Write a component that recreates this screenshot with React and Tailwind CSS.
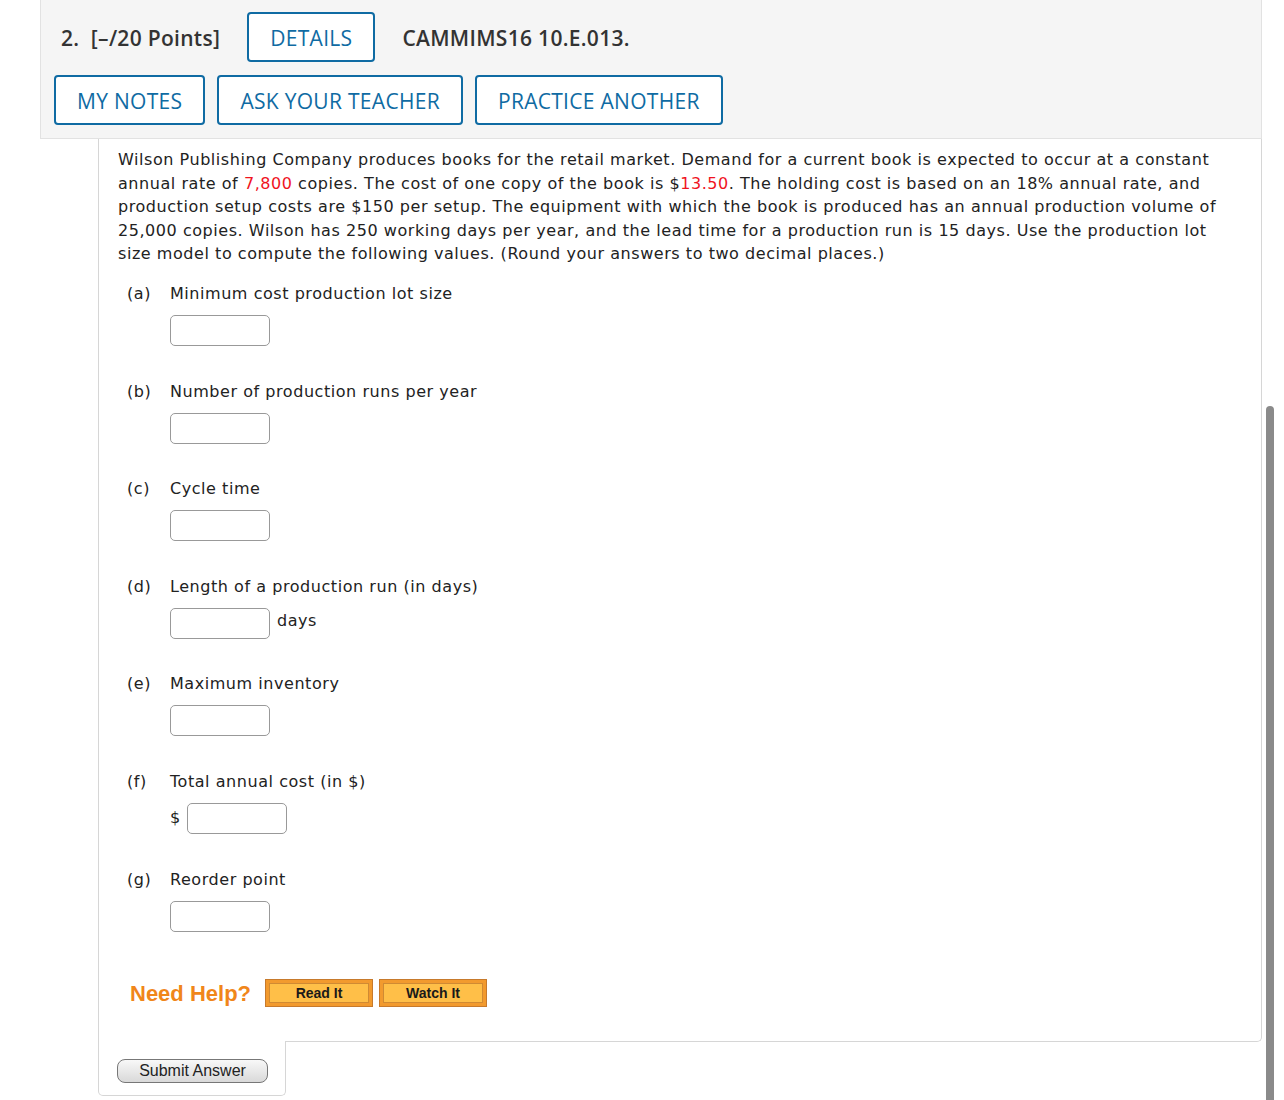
const parts = [
  { key: 'a', label: 'Minimum cost production lot size' },
  { key: 'b', label: 'Number of production runs per year' },
  { key: 'c', label: 'Cycle time' },
  { key: 'd', label: 'Length of a production run (in days)', after: 'days' },
  { key: 'e', label: 'Maximum inventory' },
  { key: 'f', label: 'Total annual cost (in $)', before: '$' },
  { key: 'g', label: 'Reorder point' },
];

const headFont = { fontFamily: '"Open Sans", "Liberation Sans", sans-serif', letterSpacing: '0.3px' };
const bodyFont = { fontFamily: '"DejaVu Sans", Verdana, sans-serif', letterSpacing: '0.55px' };
const arial = { fontFamily: '"Liberation Sans", Arial, sans-serif' };

function OutlineButton({ children }) {
  return (
    <button
      className="h-[50px] px-[21px] pt-[2px] border-2 border-[#0f6ba3] rounded-[4px] bg-white text-[#0f6ba3] text-[21px] font-medium leading-none"
      style={headFont}
    >
      {children}
    </button>
  );
}

function HelpButton({ children }) {
  return (
    <button className="h-[28px] w-[108px] p-[3px] bg-[#f29a2e] border border-[#c77a2c]">
      <span
        className="flex h-full items-center justify-center bg-[#ffbf48] border border-[#d08a33] text-[14px] font-bold text-[#1a1a1a]"
        style={arial}
      >
        {children}
      </span>
    </button>
  );
}

export default function App() {
  return (
    <div className="min-h-screen bg-white pl-[40px] pr-[22px]">
      <div className="bg-[#f5f5f5] border-x border-b border-[#e2e2e2] pt-[12px] pb-[13px]">
        <div className="flex items-center pl-[20px]">
          <span className="text-[21px] font-semibold text-[#333] pt-[3px]" style={headFont}>
            2.&nbsp; [–/20 Points]
          </span>
          <span className="ml-[27px]">
            <OutlineButton>DETAILS</OutlineButton>
          </span>
          <span className="ml-[27px] text-[21px] font-semibold text-[#333] pt-[3px]" style={headFont}>
            CAMMIMS16 10.E.013.
          </span>
        </div>
        <div className="flex gap-[12px] pl-[13px] mt-[13px]">
          <OutlineButton>MY NOTES</OutlineButton>
          <OutlineButton>ASK YOUR TEACHER</OutlineButton>
          <OutlineButton>PRACTICE ANOTHER</OutlineButton>
        </div>
      </div>

      <div className="ml-[58px]">
        <div className="border-x border-b border-[#d6d6d6] rounded-br-[5px] pl-[19px] pr-[20px] pt-[9px] pb-[31px] text-[16px] text-[#222]" style={bodyFont}>
          <p className="leading-[23.6px]">
            Wilson Publishing Company produces books for the retail market. Demand for a current book is expected to occur at a constant annual rate of{' '}
            <span className="text-[#f0141e]">7,800</span> copies. The cost of one copy of the book is ${''}
            <span className="text-[#f0141e]">13.50</span>. The holding cost is based on an 18% annual rate, and production setup costs are $150 per setup. The equipment with which the book is produced has an annual production volume of 25,000 copies. Wilson has 250 working days per year, and the lead time for a production run is 15 days. Use the production lot size model to compute the following values. (Round your answers to two decimal places.)
          </p>

          <div className="mt-[18px] ml-[9px]">
            {parts.map((p) => (
              <div key={p.key} className="mb-[35.6px] last:mb-0">
                <div className="flex h-[20px] items-center leading-[20px]">
                  <span className="w-[43px]">({p.key})</span>
                  <span>{p.label}</span>
                </div>
                <div className="flex items-center mt-[11px] pl-[43px]">
                  {p.before && <span className="mr-[6px]">{p.before}</span>}
                  <input
                    type="text"
                    className="w-[100px] h-[31px] border border-[#999] rounded-[5px] bg-white outline-none"
                  />
                  {p.after && <span className="ml-[7px] -mt-[4px]">{p.after}</span>}
                </div>
              </div>
            ))}
          </div>

          <div className="flex items-center mt-[45px] ml-[12px]" style={{ letterSpacing: 0 }}>
            <span className="text-[22px] font-bold text-[#f0861a] mr-[14px]" style={arial}>
              Need Help?
            </span>
            <HelpButton>Read It</HelpButton>
            <span className="w-[6px]" />
            <HelpButton>Watch It</HelpButton>
          </div>
        </div>

        <div className="-mt-px w-[188px] bg-white border-x border-b border-[#d6d6d6] rounded-b-[5px] pt-[17px] pb-[12px] pl-[18px]">
          <button
            className="h-[24px] w-[151px] rounded-[8px] border border-[#777] bg-gradient-to-b from-[#f8f8f8] to-[#d9d9d9] text-[16px] text-[#222] leading-none"
            style={arial}
          >
            Submit Answer
          </button>
        </div>
      </div>

      <div className="fixed right-[10px] top-[406px] bottom-0 w-[8px] rounded-t-full bg-[#8a8a8a]" />
    </div>
  );
}
